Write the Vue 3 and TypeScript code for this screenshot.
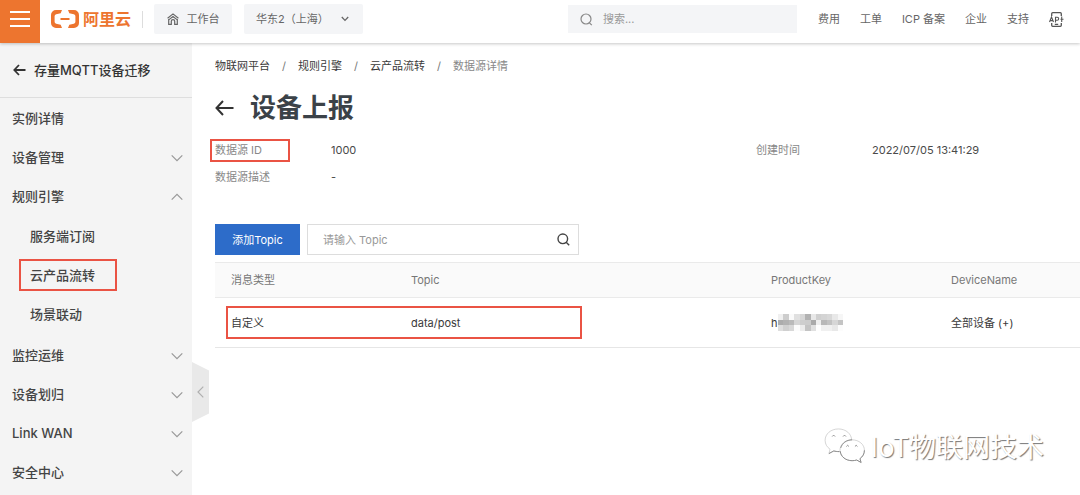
<script setup lang="ts">
import { ref } from 'vue'

interface MenuItem {
  label: string
  expandable?: boolean
  open?: boolean
  children?: { label: string; marked?: boolean }[]
}

const navLinks: string[] = ['费用', '工单', 'ICP 备案', '企业', '支持']

const menu: MenuItem[] = [
  { label: '实例详情' },
  { label: '设备管理', expandable: true },
  {
    label: '规则引擎',
    expandable: true,
    open: true,
    children: [{ label: '服务端订阅' }, { label: '云产品流转', marked: true }, { label: '场景联动' }],
  },
  { label: '监控运维', expandable: true },
  { label: '设备划归', expandable: true },
  { label: 'Link WAN', expandable: true },
  { label: '安全中心', expandable: true },
]

const crumbs: string[] = ['物联网平台', '规则引擎', '云产品流转']

const region = ref('华东2（上海）')
const globalQuery = ref('')
const topicQuery = ref('')

/* Grey levels of the masked product key, row by row. */
const mosaic: number[][] = [
  [240, 205, 250, 224, 214, 178, 232, 208, 212, 216, 232, 246],
  [172, 178, 186, 214, 206, 204, 170, 238, 184, 194, 214, 196],
  [222, 208, 216, 252, 236, 196, 224, 254, 240, 240, 232, 252],
]
const cells = mosaic.flatMap((row, y) => row.map((v, x) => ({ x, y, fill: `rgb(${v},${v},${v})` })))
</script>

<template>
  <div class="page">
    <header class="topbar">
      <button class="burger" type="button" aria-label="菜单">
        <svg width="20" height="18" viewBox="0 0 20 18" fill="none" stroke="#fff" stroke-width="2">
          <path d="M0 2h20M0 9h20M0 16h20" />
        </svg>
      </button>
      <a class="logo" href="#">
        <svg width="28" height="18" viewBox="0 0 28 18" aria-hidden="true">
          <path
            d="M11 0H5a5 5 0 0 0-5 5v8a5 5 0 0 0 5 5h6l-1.300-3.200-4.500-1a2 2 0 0 1-1.600-2V6.200a2 2 0 0 1 1.600-2l4.500-1zM17 0h6a5 5 0 0 1 5 5v8a5 5 0 0 1-5 5h-6l1.300-3.200 4.500-1a2 2 0 0 0 1.600-2V6.200a2 2 0 0 0-1.600-2l-4.500-1zM9.500 8h9v2h-9z"
            fill="#ed752f"
          />
        </svg>
        <span>阿里云</span>
      </a>
      <span class="divider"></span>
      <button class="chip" type="button">
        <svg width="12" height="12" viewBox="0 0 12 12" fill="none" stroke="#666" stroke-width="1.200">
          <path d="M.6 5.200L6 .9l5.400 4.300M2 6.600L6 3.500l4 3.100M1.700 6v5.300h2.600V8.300a1.700 1.700 0 0 1 3.400 0v3h2.600V6" />
        </svg>
        <span>工作台</span>
      </button>
      <div class="region">
        <select v-model="region" aria-label="地域">
          <option>华东2（上海）</option>
        </select>
        <svg width="8" height="6" viewBox="0 0 8 6" fill="none" stroke="#666" stroke-width="1.300">
          <path d="M.8 1L4 4.400 7.200 1" />
        </svg>
      </div>
      <label class="search">
        <svg width="13" height="13" viewBox="0 0 13 13" fill="none" stroke="#888" stroke-width="1.200">
          <circle cx="6" cy="6" r="5" />
          <path d="M9.200 9.600l2.600 2.600" />
        </svg>
        <input v-model="globalQuery" type="text" placeholder="搜索..." aria-label="搜索" />
      </label>
      <nav class="links">
        <a v-for="link in navLinks" :key="link" href="#">{{ link }}</a>
        <a href="#" class="api" aria-label="API">
          <svg width="15" height="15" viewBox="0 0 15 15" fill="none" stroke="#555" stroke-width="1.300">
            <path d="M2.700 4V1.700q0-1 1-1h7.600q1 0 1 1V4M2.700 11v2.300q0 1 1 1h7.600q1 0 1-1V11M5.800 12.300h3.400" />
            <path d="M.5 10l2-5 2 5M1.200 8.600h2.600M6.500 10.500V5.200h1.700a1.500 1.500 0 0 1 0 3H6.500M12.700 4.500V10M11.500 7.300h3" stroke-width="1.100" />
          </svg>
        </a>
      </nav>
    </header>

    <div class="body">
      <aside class="sidebar">
        <a class="side-title" href="#">
          <svg width="13" height="12" viewBox="0 0 13 12" fill="none" stroke="#333" stroke-width="1.800">
            <path d="M12.500 6H1.500M6 1L1.300 6 6 11" />
          </svg>
          <span>存量MQTT设备迁移</span>
        </a>
        <ul class="menu">
          <li v-for="item in menu" :key="item.label">
            <a class="row" href="#">
              <span>{{ item.label }}</span>
              <svg v-if="item.expandable" width="12" height="8" viewBox="0 0 12 8" fill="none" stroke="#999" stroke-width="1.200">
                <path :d="item.open ? 'M.7 6.700L6 1.300l5.300 5.400' : 'M.7 1.300L6 6.700l5.300-5.400'" />
              </svg>
            </a>
            <ul v-if="item.children" class="submenu">
              <li v-for="child in item.children" :key="child.label">
                <a class="row sub" :class="{ marked: child.marked }" href="#">{{ child.label }}</a>
              </li>
            </ul>
          </li>
        </ul>
        <button class="collapse" type="button" aria-label="收起">
          <svg width="7" height="12" viewBox="0 0 7 12" fill="none" stroke="#b0b0b0" stroke-width="1.200">
            <path d="M6.300.7L1 6l5.300 5.300" />
          </svg>
        </button>
      </aside>

      <main class="content">
        <nav class="crumbs">
          <template v-for="crumb in crumbs" :key="crumb">
            <a href="#">{{ crumb }}</a>
            <span class="slash">/</span>
          </template>
          <span class="current">数据源详情</span>
        </nav>

        <div class="heading">
          <a href="#" class="back" aria-label="返回">
            <svg width="19" height="16" viewBox="0 0 19 16" fill="none" stroke="#333" stroke-width="2">
              <path d="M18.500 8H1.500M8 1L1.500 8 8 15" />
            </svg>
          </a>
          <h1>设备上报</h1>
        </div>

        <dl class="details">
          <dt><span class="marked-label">数据源 ID</span></dt>
          <dd>1000</dd>
          <dt>创建时间</dt>
          <dd>2022/07/05 13:41:29</dd>
          <dt>数据源描述</dt>
          <dd>-</dd>
        </dl>

        <div class="toolbar">
          <button class="primary" type="button">添加Topic</button>
          <div class="topic-search">
            <input v-model="topicQuery" type="text" placeholder="请输入 Topic" aria-label="Topic" />
            <button type="button" aria-label="搜索 Topic">
              <svg width="13" height="13" viewBox="0 0 13 13" fill="none" stroke="#444" stroke-width="1.400">
                <circle cx="5.800" cy="5.800" r="4.800" />
                <path d="M9.200 9.200l3 3" />
              </svg>
            </button>
          </div>
        </div>

        <table>
          <thead>
            <tr>
              <th class="type">消息类型</th>
              <th class="topic">Topic</th>
              <th class="key">ProductKey</th>
              <th>DeviceName</th>
            </tr>
          </thead>
          <tbody>
            <tr>
              <td class="outlined">自定义</td>
              <td>data/post</td>
              <td>
                <div class="masked">
                  <span>h</span>
                  <svg width="65" height="17" viewBox="0 0 12 3" preserveAspectRatio="none" shape-rendering="crispEdges">
                    <rect v-for="c in cells" :key="`${c.x}-${c.y}`" :x="c.x" :y="c.y" width="1" height="1" :fill="c.fill" />
                  </svg>
                </div>
              </td>
              <td>全部设备 (+)</td>
            </tr>
          </tbody>
        </table>
      </main>
    </div>

    <div class="watermark">
      <svg width="42" height="36" viewBox="0 0 44 38" aria-hidden="true">
        <g fill="#fff" stroke="#c8c8c8" stroke-width=".8">
          <path d="M15 1C7 1 1 6.300 1 13c0 4 2 7.200 5.200 9.400L5 27l5.200-2.800c1.600.5 3.200.7 4.800.7 8 0 14-5.300 14-12S23 1 15 1z" />
          <path d="M29.500 12.500c-7.200 0-12.800 4.800-12.800 11s5.600 11 12.800 11c1.800 0 3.300-.2 4.800-.7l4.700 2.600-1.200-4c2.900-2.100 4.700-5.200 4.700-8.900 0-6.200-5.800-11-13-11z" />
        </g>
        <g fill="none" stroke="#888" stroke-width="1">
          <path d="M17 24.500c.5 5.700 5.800 10 12.500 10 1.800 0 3.300-.2 4.800-.7l4.700 2.600-1.200-4c2.900-2.100 4.700-5.200 4.700-8.900M5 27l5.200-2.800c1.600.5 3.200.7 5.800.7M17.500 21c1.500-5 6-8.500 12-8.500" />
          <path d="M8.500 9q1.500-3 3 0M20 9q1.500-3 3 0M23.500 19.500q1.300-2.500 2.600 0M32.500 19.500q1.300-2.500 2.600 0" />
        </g>
      </svg>
      <span>IoT物联网技术</span>
    </div>
  </div>
</template>

<style>
body {
  margin: 0;
  background: #fff;
}
</style>

<style scoped>
.page {
  position: relative;
  min-height: 100vh;
  display: flex;
  flex-direction: column;
  overflow: hidden;
  font-family: Inter, 'Noto Sans CJK SC', sans-serif;
  font-size: 11px;
  line-height: 16px;
  color: #3a3a3a;
}

.page *,
.page *::after {
  box-sizing: border-box;
}

a {
  color: inherit;
  text-decoration: none;
}

button,
input,
select {
  margin: 0;
  padding: 0;
  border: 0;
  background: none;
  font: inherit;
  color: inherit;
  outline: none;
}

svg {
  display: block;
  flex: none;
}

ul {
  margin: 0;
  padding: 0;
  list-style: none;
}

.topbar {
  position: relative;
  z-index: 2;
  display: flex;
  align-items: center;
  height: 43px;
  padding: 0 16px 5px 0;
  background: #fff;
  box-shadow: 0 1px 3px rgba(0, 0, 0, 0.22);
  color: #666;
}

.burger {
  display: flex;
  align-items: center;
  justify-content: center;
  align-self: stretch;
  width: 40px;
  flex: none;
  margin-bottom: -5px;
  padding-bottom: 5px;
  background: #ed752f;
}

.logo {
  display: flex;
  align-items: center;
  gap: 4px;
  width: 80px;
  margin-left: 11px;
  flex: none;
  color: #ed752f;
  font-size: 16px;
  font-weight: 700;
  white-space: nowrap;
}

.divider {
  width: 1px;
  height: 17px;
  margin: 0 11px;
  flex: none;
  background: #ddd;
}

.chip {
  display: flex;
  align-items: center;
  justify-content: center;
  gap: 8px;
  width: 78px;
  height: 30px;
  flex: none;
  border-radius: 2px;
  background: #f4f5f7;
  white-space: nowrap;
}

.region {
  position: relative;
  width: 119px;
  height: 30px;
  margin-left: 12px;
  flex: none;
}

.region select {
  width: 100%;
  height: 100%;
  padding-left: 12px;
  appearance: none;
  border-radius: 2px;
  background: #f4f5f7;
}

.region svg {
  position: absolute;
  right: 14px;
  top: 12px;
  pointer-events: none;
}

.search {
  display: flex;
  align-items: center;
  gap: 10px;
  width: 229px;
  height: 28px;
  margin-left: auto;
  padding: 0 12px;
  background: #f4f5f7;
}

.search input {
  flex: 1;
  min-width: 0;
}

input::placeholder {
  color: #999;
  opacity: 1;
}

.links {
  display: flex;
  align-items: center;
  gap: 20px;
  margin-left: 21px;
  white-space: nowrap;
}

.body {
  display: flex;
  flex: 1;
}

.sidebar {
  position: relative;
  width: 192px;
  flex: none;
  background: #f4f4f4;
  font-size: 13px;
  font-weight: 500;
  line-height: 19px;
  color: #444;
}

.side-title {
  display: flex;
  align-items: center;
  gap: 8px;
  height: 55px;
  padding-left: 13px;
  border-bottom: 1px solid #dedede;
  color: #333;
}

.menu {
  padding-top: 1px;
}

.row {
  display: flex;
  align-items: center;
  justify-content: space-between;
  height: 39px;
  padding: 0 9px 0 12px;
}

.submenu {
  padding: 1px 0 2px;
}

.row.sub {
  position: relative;
  padding-left: 30px;
}

.row.marked::after {
  content: '';
  position: absolute;
  left: 19px;
  top: 3px;
  width: 98px;
  height: 32px;
  border: 2px solid #ea5344;
}

.collapse {
  position: absolute;
  left: 100%;
  top: 319px;
  display: flex;
  align-items: center;
  justify-content: center;
  width: 17px;
  height: 60px;
  background: #e9e9e9;
  clip-path: polygon(0 0, 100% 14%, 100% 86%, 0 100%);
}

.content {
  flex: 1;
  min-width: 0;
  padding: 15px 0 0 23px;
}

.crumbs {
  display: flex;
  gap: 12px;
}

.slash {
  color: #777;
}

.current {
  color: #888;
}

.heading {
  display: flex;
  align-items: center;
  gap: 16px;
  height: 40px;
  margin-top: 14px;
}

h1 {
  margin: 0;
  font-size: 26px;
  line-height: 40px;
  font-weight: 700;
  color: #3b4248;
}

.details {
  display: grid;
  grid-template-columns: 116px 1fr 116px 208px;
  row-gap: 11px;
  margin: 14px 0 0;
}

.details dt {
  color: #888;
}

.details dd {
  margin: 0;
  color: #4a4a4a;
}

.marked-label {
  position: relative;
}

.marked-label::after {
  content: '';
  position: absolute;
  left: -5px;
  top: -4px;
  width: 80px;
  height: 23px;
  border: 2px solid #ea5344;
}

.toolbar {
  display: flex;
  gap: 7px;
  margin-top: 39px;
}

.primary {
  width: 85px;
  height: 31px;
  background: #2d6cc9;
  color: #fff;
}

.topic-search {
  display: flex;
  width: 272px;
  height: 31px;
  border: 1px solid #ddd;
}

.topic-search input {
  flex: 1;
  min-width: 0;
  padding-left: 15px;
}

.topic-search button {
  padding: 0 8px;
}

table {
  width: 100%;
  margin-top: 7px;
  border-collapse: separate;
  border-spacing: 0;
  table-layout: fixed;
}

th,
td {
  padding: 0 0 0 16px;
  text-align: left;
  font-weight: 400;
}

th {
  height: 36px;
  border-top: 1px solid #eaeaea;
  border-bottom: 1px solid #eaeaea;
  background: #fafafa;
  color: #777;
}

td {
  position: relative;
  height: 50px;
  border-bottom: 1px solid #e6e6e6;
}

.type,
.key {
  width: 180px;
}

.topic {
  width: 360px;
}

.outlined::after {
  content: '';
  position: absolute;
  left: 11px;
  top: 8px;
  width: 356px;
  height: 33px;
  border: 2px solid #ea5344;
}

.masked {
  display: flex;
  align-items: center;
}

.watermark {
  position: absolute;
  right: 36px;
  bottom: 30px;
  display: flex;
  align-items: center;
  gap: 4px;
  color: #fff;
  font-family: 'Noto Sans CJK SC', sans-serif;
  font-size: 27px;
  line-height: 38px;
  text-shadow: 1px 1px 1px #777;
  white-space: nowrap;
}
</style>
